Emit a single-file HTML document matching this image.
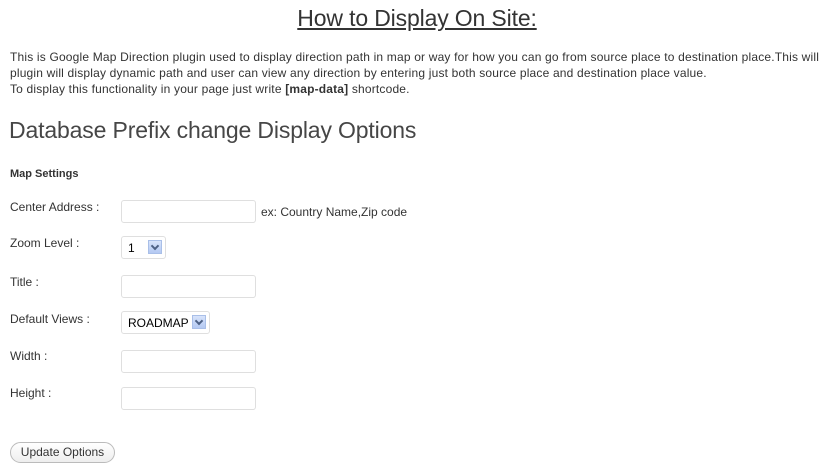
<!DOCTYPE html>
<html><head><style>
body{margin:0;width:830px;height:465px;background:#fff;font-family:"Liberation Sans",Arial,sans-serif;color:#333;position:relative;overflow:hidden}
.a{position:absolute;white-space:nowrap}
h1{position:absolute;margin:0;top:5px;left:0;width:834px;text-align:center;font-weight:normal;font-size:23px;text-decoration:underline;color:#333;letter-spacing:-0.15px}
.p{position:absolute;left:10px;top:49px;font-size:12px;line-height:16px;letter-spacing:0.18px;color:#333;width:830px;white-space:nowrap}
h2{position:absolute;margin:0;left:9px;top:117px;font-weight:normal;font-size:23px;color:#464646;letter-spacing:-0.15px}
.l{font-size:12px;left:10px;color:#333}
.in{position:absolute;left:121px;width:133px;height:21px;border:1px solid #dfdfdf;border-radius:3px;background:#fff}
.sel{position:absolute;left:121px;height:21px;border:1px solid #dfdfdf;border-radius:3px;background:#fff;font-size:12px;color:#000}
.sel span{position:absolute;left:6px;top:4px}
.sel i{position:absolute;right:3px;top:3px;width:14px;height:14px;background:linear-gradient(#d7e3fb,#b4c9f2);border:1px solid #a9bfe8;box-sizing:border-box}
.sel i:after{content:"";position:absolute;left:3px;top:2px;width:4px;height:4px;border-right:2px solid #4d6185;border-bottom:2px solid #4d6185;transform:rotate(45deg)}
.btn{position:absolute;left:10px;top:442px;width:103px;height:19px;border:1px solid #bbb;border-radius:11px;background:linear-gradient(#fff,#eee);font-size:12px;text-align:center;line-height:19px;color:#333}
</style></head><body>
<h1>How to Display On Site:</h1>
<div class="p">This is Google Map Direction plugin used to display direction path in map or way for how you can go from source place to destination place.This will<br>plugin will display dynamic path and user can view any direction by entering just both source place and destination place value.<br>To display this functionality in your page just write <b>[map-data]</b> shortcode.</div>
<h2>Database Prefix change Display Options</h2>
<div class="a" style="left:10px;top:168px;font-size:11px;font-weight:bold;color:#333">Map Settings</div>
<div class="a l" style="top:200px">Center Address :</div>
<div class="in" style="top:200px"></div>
<div class="a" style="left:261px;top:205px;font-size:12px">ex: Country Name,Zip code</div>
<div class="a l" style="top:236px">Zoom Level :</div>
<div class="sel" style="top:236px;width:43px"><span>1</span><i></i></div>
<div class="a l" style="top:275px">Title :</div>
<div class="in" style="top:275px"></div>
<div class="a l" style="top:312px">Default Views :</div>
<div class="sel" style="top:311px;width:87px"><span>ROADMAP</span><i></i></div>
<div class="a l" style="top:349px">Width :</div>
<div class="in" style="top:350px"></div>
<div class="a l" style="top:386px">Height :</div>
<div class="in" style="top:387px"></div>
<div class="btn">Update Options</div>
</body></html>
